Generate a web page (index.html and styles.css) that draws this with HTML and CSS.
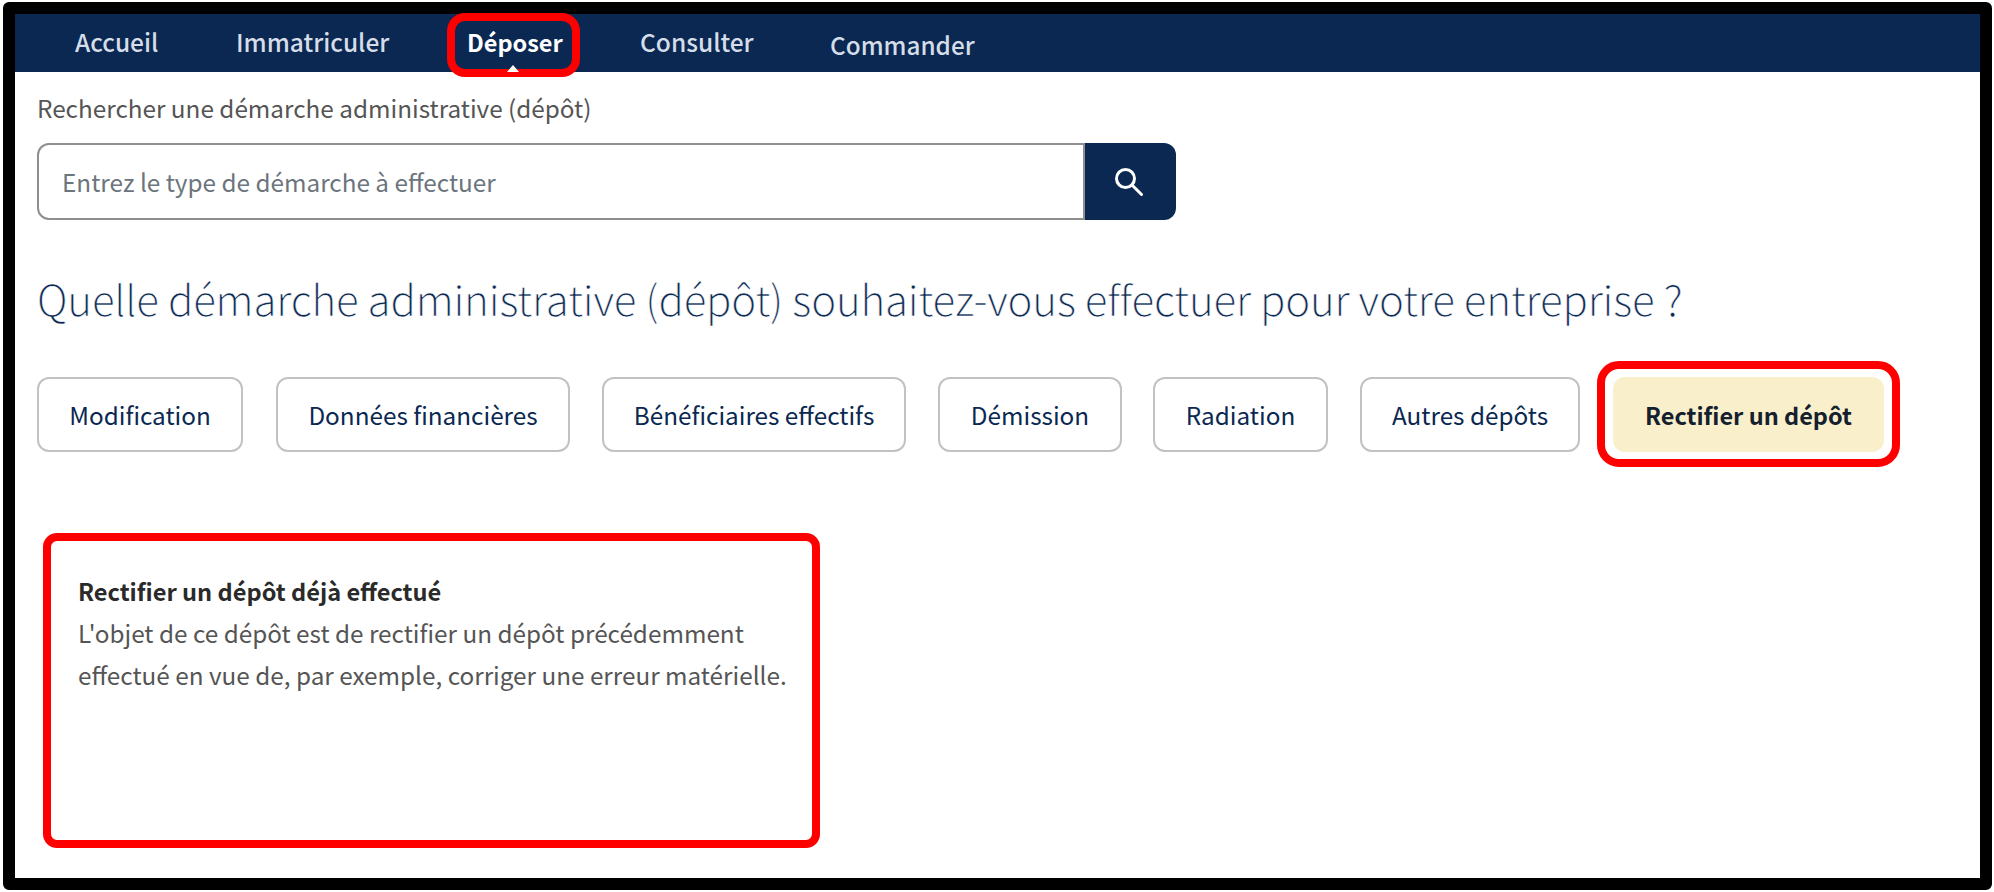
FILE: index.html
```html
<!DOCTYPE html>
<html lang="fr">
<head>
  <meta charset="UTF-8" />
  <title>Déposer</title>
  <link rel="stylesheet" href="styles.css">
</head>
<body>

  <div class="frame">
    <!-- Main navigation -->
    <nav class="topnav">
      <a class="nav-accueil" href="#">Accueil</a>
      <a class="nav-immat" href="#">Immatriculer</a>
      <a class="nav-deposer" href="#">Déposer</a>
      <a class="nav-consulter" href="#">Consulter</a>
      <a class="nav-commander" href="#">Commander</a>
    </nav>

    <main>
      <!-- Search -->
      <p class="search-label">Rechercher une démarche administrative (dépôt)</p>
      <div class="search">
        <div class="search-input">Entrez le type de démarche à effectuer</div>
        <button class="search-btn" type="button" aria-label="Rechercher">
          <svg width="28" height="28" viewBox="0 0 28 28" fill="none" stroke="#fff" stroke-width="3" stroke-linecap="round">
            <circle cx="10.5" cy="10.5" r="9" />
            <path d="M17 17 L26.5 26.5" />
          </svg>
        </button>
      </div>

      <h1>Quelle démarche administrative (dépôt) souhaitez-vous effectuer pour votre entreprise ?</h1>

      <!-- Category buttons -->
      <div class="categories">
        <a class="cat cat-modif" href="#">Modification</a>
        <a class="cat cat-donnees" href="#">Données financières</a>
        <a class="cat cat-benef" href="#">Bénéficiaires effectifs</a>
        <a class="cat cat-demission" href="#">Démission</a>
        <a class="cat cat-radiation" href="#">Radiation</a>
        <a class="cat cat-autres" href="#">Autres dépôts</a>
        <div class="marked">
          <a class="cat cat-active" href="#">Rectifier un dépôt</a>
        </div>
      </div>

      <!-- Result card -->
      <div class="card">
        <h2>Rectifier un dépôt déjà effectué</h2>
        <p>L'objet de ce dépôt est de rectifier un dépôt précédemment<br>effectué en vue de, par exemple, corriger une erreur matérielle.</p>
      </div>
    </main>
  </div>

</body>
</html>
```

FILE: styles.css
```css
/* Global reset and font settings */
*, *::before, *::after { box-sizing: border-box; }
html, body {
  margin: 0;
  padding: 0;
  background: #fff;
  font-family: "Noto Sans CJK SC", "Open Sans", sans-serif;
}
a { text-decoration: none; }

/* Black screenshot frame */
.frame {
  width: 1989px;
  height: 888px;
  margin: 2px 0 0 3px;
  border: 12px solid #000;
  border-radius: 6px;
  background: #fff;
}

/* Top navigation */
.topnav {
  display: flex;
  height: 58px;
  padding-left: 60px;
  background: #0a2851;
}
.topnav a {
  position: relative;
  padding-top: 11px;
  font-size: 24.5px;
  line-height: 34px;
  font-weight: 500;
  color: #d5dde8;
  white-space: nowrap;
}
.nav-accueil { width: 161px; }
.nav-immat { width: 231px; }
.topnav .nav-deposer {
  width: 173px;
  font-size: 23.5px;
  font-weight: 700;
  color: #fff;
}
.nav-consulter { width: 190px; }
.topnav .nav-commander { padding-top: 14px; font-size: 24.3px; }

/* White caret under the active item */
.nav-deposer::after {
  content: "";
  position: absolute;
  left: 40px;
  bottom: 0;
  border-left: 6px solid transparent;
  border-right: 6px solid transparent;
  border-bottom: 7px solid #fff;
}

/* Red annotation around the active item */
.nav-deposer::before {
  content: "";
  position: absolute;
  left: -20px;
  top: -1px;
  width: 133px;
  height: 64px;
  border: 8px solid #f00;
  border-radius: 18px;
}

/* Page content */
main { padding: 0 0 0 22px; }

.search-label {
  margin: 0;
  padding-top: 20px;
  font-size: 24.3px;
  line-height: 32px;
  color: #555;
}
.search {
  display: flex;
  width: 1139px;
  height: 77px;
  margin-top: 19px;
}
.search-input {
  flex: 1;
  padding-left: 23px;
  border: 2px solid #8f8f8f;
  border-radius: 12px 0 0 12px;
  font-size: 24.3px;
  line-height: 73px;
  color: #6c757d;
}
.search-btn {
  display: flex;
  align-items: center;
  justify-content: center;
  width: 91px;
  padding: 0 3px 0 0;
  border: none;
  border-radius: 0 12px 12px 0;
  background: #0a2851;
}

/* No light cut of the font here, so a thin white stroke slims the letters */
h1 {
  margin: 48px 0 0;
  font-size: 42px;
  letter-spacing: -0.16px;
  line-height: 60px;
  font-weight: 300;
  color: #0a2851;
  -webkit-text-stroke: 0.5px #fff;
  white-space: nowrap;
}

/* Category buttons */
.categories {
  display: flex;
  align-items: center;
  height: 106px;
  margin-top: 33px;
}
.cat {
  display: flex;
  align-items: center;
  justify-content: center;
  height: 75px;
  border: 2px solid #c2c2c2;
  border-radius: 12px;
  font-size: 24.3px;
  color: #0a2851;
  white-space: nowrap;
}
.cat-modif { width: 206px; margin-right: 33px; }
.cat-donnees { width: 294px; margin-right: 32px; }
.cat-benef { width: 304px; margin-right: 32px; }
.cat-demission { width: 184px; margin-right: 31px; }
.cat-radiation { width: 175px; margin-right: 32px; }
.cat-autres { width: 220px; margin-right: 17px; }
.marked {
  width: 303px;
  height: 106px;
  padding: 8px;
  border: 8px solid #f00;
  border-radius: 22px;
}
.cat-active {
  width: 271px;
  border: none;
  background: #f9efcb;
  font-size: 23.5px;
  font-weight: 700;
  color: #14202e;
}

/* Result card with red annotation */
.card {
  width: 777px;
  height: 315px;
  margin: 66px 0 0 6px;
  padding: 29px 27px;
  border: 8px solid #f00;
  border-radius: 14px;
}
.card h2 {
  margin: 0;
  font-size: 23.6px;
  line-height: 42px;
  font-weight: 700;
  color: #2a2a2a;
}
.card p {
  margin: 0;
  font-size: 24.3px;
  line-height: 42px;
  color: #555;
  white-space: nowrap;
}
```
